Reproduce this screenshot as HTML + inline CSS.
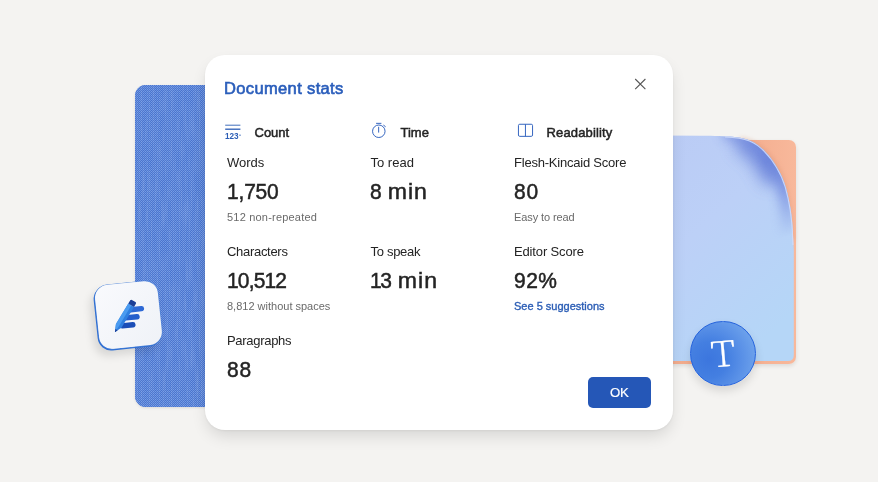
<!DOCTYPE html>
<html lang="en">
<head>
<meta charset="utf-8">
<title>Document stats</title>
<style>
html,body{margin:0;padding:0;}
body{will-change:transform;width:878px;height:482px;overflow:hidden;background:#f4f3f1;font-family:"Liberation Sans",sans-serif;position:relative;}
.abs{position:absolute;}
.t{position:absolute;white-space:nowrap;line-height:1;color:#242424;}
.h{font-size:13px;color:#242424;-webkit-text-stroke:0.5px #242424;}
.l{font-size:13px;color:#242424;}
.n{font-size:22.6px;color:#242424;-webkit-text-stroke:0.5px #242424;transform:scaleX(.929);transform-origin:0 0;}
.m{display:inline-block;transform:scaleX(1.1);transform-origin:0 0;letter-spacing:1px;}
.s{font-size:11px;color:#6a6a6a;}
#fabric{left:135px;top:85px;width:120px;height:321.5px;border-radius:11px;background:#5480d6;box-shadow:0 1px 3px rgba(0,0,0,.10);overflow:hidden;}
#orange{left:660px;top:140px;width:136px;height:223.5px;border-radius:7px;background:linear-gradient(90deg,#f3ad8e 60%,#f8b89b 100%);box-shadow:0 2px 4px rgba(0,0,0,.10);}
#card{left:204.5px;top:54.7px;width:468.7px;height:375.3px;border-radius:20px;background:#fff;box-shadow:0 8px 16px -2px rgba(0,0,0,.12),0 1px 3px rgba(0,0,0,.06);}
#ok{left:587.7px;top:377.3px;width:63px;height:30.8px;border-radius:5px;background:#2557b7;color:#fff;font-size:13.2px;text-align:center;line-height:32.4px;-webkit-text-stroke:0.2px #fff;letter-spacing:-0.4px;}
#tile{left:97.3px;top:283.2px;width:63px;height:64px;border-radius:13px;transform:rotate(-6deg);background:linear-gradient(135deg,#f9fafd,#eff2f7);box-shadow:0 0 0 0.6px #4f86dc,-1px 1px 0 0.6px #2f6fd2,-5px 6px 10px rgba(0,0,0,.13);}
#circle{left:690.2px;top:320.5px;width:65.4px;height:65.4px;border-radius:50%;box-sizing:border-box;border:1.5px solid #2462dc;background:radial-gradient(circle 52px at 28% 60%,#3c76de 0%,#447fe1 35%,#5a91e7 65%,#73a7ed 100%);box-shadow:0 5px 10px rgba(0,0,0,.12);}
</style>
</head>
<body>
<div class="abs" id="fabric">
<svg width="120" height="322" style="display:block">
  <defs>
    <pattern id="chk" width="2" height="2" patternUnits="userSpaceOnUse">
      <rect width="2" height="2" fill="#4972ce"/>
      <rect width="1" height="1" fill="#749de4"/>
      <rect x="1" y="1" width="1" height="1" fill="#6791df"/>
    </pattern>
  </defs>
  <filter id="streak" x="0" y="0" width="100%" height="100%"><feTurbulence type="fractalNoise" baseFrequency="0.5 0.035" numOctaves="2" seed="4"/><feColorMatrix values="0 0 0 0 1  0 0 0 0 1  0 0 0 0 1  1.6 0 0 0 -0.55"/></filter>
  <rect width="120" height="322" fill="url(#chk)"/>
  <rect width="120" height="322" filter="url(#streak)" opacity="0.12"/>
</svg>
</div>
<div class="abs" id="orange"></div>
<svg class="abs" style="left:660px;top:130px" width="150" height="240" viewBox="660 130 150 240">
  <defs>
    <linearGradient id="pg" x1="0" y1="0" x2="0.55" y2="1">
      <stop offset="0" stop-color="#bacbf5"/><stop offset="0.45" stop-color="#bcd0f7"/><stop offset="1" stop-color="#b5d6f7"/>
    </linearGradient>
    <radialGradient id="fade" cx="764" cy="162" r="78" gradientUnits="userSpaceOnUse">
      <stop offset="0" stop-color="#fff" stop-opacity="1"/>
      <stop offset="0.45" stop-color="#fff" stop-opacity="0.8"/>
      <stop offset="1" stop-color="#fff" stop-opacity="0"/>
    </radialGradient>
    <mask id="fm" maskUnits="userSpaceOnUse" x="660" y="130" width="150" height="240"><rect x="660" y="130" width="150" height="240" fill="url(#fade)"/></mask>
    <filter id="b7" filterUnits="userSpaceOnUse" x="640" y="100" width="200" height="300"><feGaussianBlur stdDeviation="5.5"/></filter>
    <filter id="b9" filterUnits="userSpaceOnUse" x="640" y="100" width="200" height="300"><feGaussianBlur stdDeviation="7.5"/></filter>
    <filter id="b2" filterUnits="userSpaceOnUse" x="640" y="100" width="200" height="300"><feGaussianBlur stdDeviation="2"/></filter>
    <clipPath id="pc"><path d="M660 135.6 L700 135.8 C730 136 741 137 749.7 140.4 C756 143 761 147 764.6 151 C770 156.5 774 162 777 167.3 C781 174 784 181 785.8 187 C788 195 789.7 203 790.7 209.6 C791.8 217 792.5 224 792.8 229.5 L793.8 250 L793.8 355 Q793.8 361 787.8 361 L660 361 Z"/></clipPath>
  </defs>
  <path d="M740 140 C760 143 775 160 782 180 C787 195 790 215 791 240" fill="none" stroke="#d98f70" stroke-width="6" opacity="0.35" filter="url(#b2)"/>
  <g clip-path="url(#pc)">
    <rect x="660" y="130" width="140" height="235" fill="url(#pg)"/>
    <g mask="url(#fm)">
      <path d="M722 132 C742 133 752 137 761 145 C772 155 779 168 783.5 184 C787.5 198 789.5 215 790.5 240" fill="none" stroke="#6a82da" stroke-width="15" filter="url(#b7)" opacity="0.9"/>
      <path d="M746 144 C757 150 765 159 771 174" fill="none" stroke="#5f78d6" stroke-width="24" stroke-linecap="round" filter="url(#b9)" opacity="0.75"/>
    </g>
    <path d="M725 136.3 C738 136.6 744 138 749.7 140.4 C756 143 761 147 764.6 151 C770 156.5 774 162 777 167.3 C781 174 784 181 785.8 187 C788 195 789.7 203 790.7 209.6 C791.8 217 792.5 224 792.8 229.5 L793.4 245" fill="none" stroke="#cddafb" stroke-width="2.2" opacity="0.9"/>
  </g>
</svg>
<div class="abs" id="card"></div>

<div class="abs" id="tile">
<svg width="63" height="64" viewBox="0.5 0 63 64" style="display:block">
  <rect x="30" y="24.3" width="18.2" height="5.4" rx="2.7" fill="#2e69d5"/>
  <rect x="26" y="31.9" width="17" height="5.4" rx="2.7" fill="#255fcc"/>
  <rect x="22" y="39.5" width="16" height="5.4" rx="2.7" fill="#1b4eb7"/>
  <g transform="translate(16.7 47.7) rotate(37)">
    <path d="M0 0 L-3.3 -7.5 V-31.5 H3.3 V-7.5 Z" fill="#2f7fe0"/>
    <path d="M0 0 L-3.3 -7.5 V-31.5 H0.3 V-7.5 Z" fill="#4a9bf0"/>
    <path d="M-3.3 -31.5 H3.3 V-35.2 Q3.3 -36.4 2.1 -36.4 H-2.1 Q-3.3 -36.4 -3.3 -35.2 Z" fill="#1b3f97"/>
    <path d="M0 0 L-1.3 -3 H1.3 Z" fill="#1b3f97"/>
  </g>
</svg>
</div>

<div class="abs" id="circle"></div>
<svg class="abs" style="left:690px;top:320px" width="66" height="66" viewBox="0 0 66 66">
  <text x="33.1" y="46.6" text-anchor="middle" font-family="Noto Serif CJK SC, DejaVu Serif, serif" font-weight="200" font-size="35.2" fill="#fff" stroke="#fff" stroke-width="0.2" transform="rotate(-5 33 33) translate(33.1 0) scale(1.08 1) translate(-33.1 0)">T</text>
</svg>

<div class="t" id="title" style="left:224px;top:80.4px;font-size:16.5px;color:#2b5db5;-webkit-text-stroke:0.65px #2b5fbf;letter-spacing:0.36px;">Document stats</div>

<svg class="abs" style="left:220px;top:118px" width="30" height="26" viewBox="220 118 30 26">
  <path d="M225.2 125.2 H240.4" stroke="#2b5db5" stroke-width="0.9" fill="none"/><path d="M225.2 129.2 H240.4" stroke="#2b5db5" stroke-width="1.3" fill="none"/>
  <text x="225.1" y="138.8" font-family="Liberation Sans, sans-serif" font-weight="bold" font-size="8.2" fill="#2b5db5" letter-spacing="-0.1">123</text>
  <rect x="239.4" y="134.6" width="1.2" height="1.2" fill="#2b5db5"/>
</svg>
<svg class="abs" style="left:366px;top:118px" width="26" height="24" viewBox="366 118 26 24">
  <circle cx="378.8" cy="131.25" r="6.25" fill="none" stroke="#2b5ebd" stroke-width="0.95"/>
  <path d="M376.5 123.35 H381 M378.65 127.2 V132.2 M383.7 125.3 L385.3 126.5" stroke="#2b5ebd" stroke-width="0.95" fill="none" stroke-linecap="round"/>
</svg>
<svg class="abs" style="left:512px;top:118px" width="26" height="24" viewBox="512 118 26 24">
  <rect x="518.45" y="124.25" width="14.1" height="12.1" rx="1.3" fill="none" stroke="#2b5ebd" stroke-width="0.95"/>
  <path d="M525.45 124.3 V136.3" stroke="#2b5ebd" stroke-width="0.95" fill="none"/>
</svg>
<svg class="abs" style="left:630px;top:74px" width="20" height="20" viewBox="630 74 20 20">
  <path d="M635.2 79 L645.4 89.1 M645.4 79 L635.2 89.1" stroke="#555" stroke-width="1.1" fill="none"/>
</svg>

<div class="t h" style="left:254.5px;top:125.7px;letter-spacing:0px;">Count</div>
<div class="t h" style="left:400.5px;top:125.7px;letter-spacing:0px;">Time</div>
<div class="t h" style="left:546.5px;top:125.7px;letter-spacing:0.15px;">Readability</div>

<div class="t l" style="left:227px;top:155.5px;">Words</div>
<div class="t n" style="left:227px;top:180.6px;letter-spacing:-0.2px;">1,750</div>
<div class="t s" style="left:227px;top:212px;letter-spacing:0.2px;">512 non-repeated</div>
<div class="t l" style="left:227px;top:244.5px;letter-spacing:-0.3px;">Characters</div>
<div class="t n" style="left:227px;top:269.6px;letter-spacing:-0.9px;">10,512</div>
<div class="t s" style="left:227px;top:301px;">8,812 without spaces</div>
<div class="t l" style="left:227px;top:333.5px;letter-spacing:-0.3px;">Paragraphs</div>
<div class="t n" style="left:227.3px;top:358.6px;letter-spacing:1px;">88</div>

<div class="t l" style="left:370.5px;top:155.5px;">To read</div>
<div class="t n" style="left:370px;top:180.6px;letter-spacing:0px;word-spacing:0.5px;">8 <span class="m">min</span></div>
<div class="t l" style="left:370.5px;top:244.5px;letter-spacing:-0.3px;">To speak</div>
<div class="t n" style="left:369.8px;top:269.6px;letter-spacing:-1.5px;word-spacing:3.3px;">13 <span class="m">min</span></div>

<div class="t l" style="left:514px;top:155.5px;letter-spacing:-0.22px;">Flesh-Kincaid Score</div>
<div class="t n" style="left:514.3px;top:180.6px;letter-spacing:0.9px;">80</div>
<div class="t s" style="left:514px;top:212px;letter-spacing:-0.1px;">Easy to read</div>
<div class="t l" style="left:514px;top:244.5px;letter-spacing:-0.15px;">Editor Score</div>
<div class="t n" style="left:514.2px;top:269.6px;letter-spacing:0.5px;">92%</div>
<div class="t s" style="left:514px;top:301px;color:#2b5db5;-webkit-text-stroke:0.35px #2b5db5;letter-spacing:0px;">See 5 suggestions</div>

<div class="abs" id="ok">OK</div>
</body>
</html>
